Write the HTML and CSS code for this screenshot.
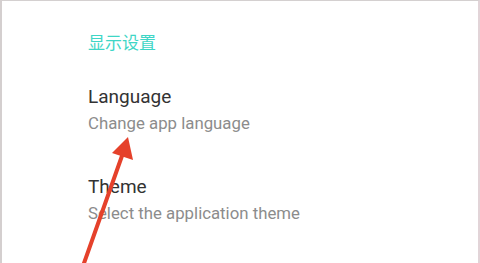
FILE: index.html
```html
<!DOCTYPE html>
<html lang="zh">
<head>
  <meta charset="UTF-8" />
  <title>Settings</title>
  <link rel="stylesheet" href="styles.css">
</head>
<body>
  <div class="screen">
    <div class="settings">
      <h3 class="group-title">显示设置</h3>

      <div class="pref">
        <p class="pref-title">Language</p>
        <p class="pref-summary">Change app language</p>
      </div>

      <div class="pref">
        <p class="pref-title">Theme</p>
        <p class="pref-summary">Select the application theme</p>
      </div>
    </div>

    <!-- annotation arrow -->
    <svg class="arrow" width="480" height="263" viewBox="0 0 480 263">
      <line x1="83" y1="266" x2="123" y2="153" stroke="#e5412b" stroke-width="4" stroke-linecap="round" />
      <polygon points="128,137 133,160 112,153" fill="#e5412b" />
    </svg>
  </div>
</body>
</html>
```

FILE: styles.css
```css
* { margin: 0; padding: 0; box-sizing: border-box; }
body { font-family: Roboto, "Noto Sans CJK SC", sans-serif; background-color: #fff; }

.screen {
  position: relative;
  width: 480px;
  height: 263px;
  overflow: hidden;
  border-top: 1px solid #d4d0d0;
  border-left: 2px solid #d4cfcf;
  border-right: 2px solid #e2d4d8;
}

.settings {
  padding: 30px 0 0 86px;
}

.group-title {
  font-family: "Noto Sans CJK SC", sans-serif;
  font-weight: normal;
  font-size: 17px;
  line-height: 22px;
  color: #3fd6c6;
  margin-bottom: 33px;
}

.pref {
  margin-bottom: 43px;
}
.pref-title {
  font-size: 19px;
  line-height: 22px;
  color: #333;
}
.pref-summary {
  font-size: 16.8px;
  line-height: 20px;
  color: #8c8c8c;
  margin-top: 5px;
}

.arrow {
  position: absolute;
  top: -1px;
  left: -2px;
}
```
